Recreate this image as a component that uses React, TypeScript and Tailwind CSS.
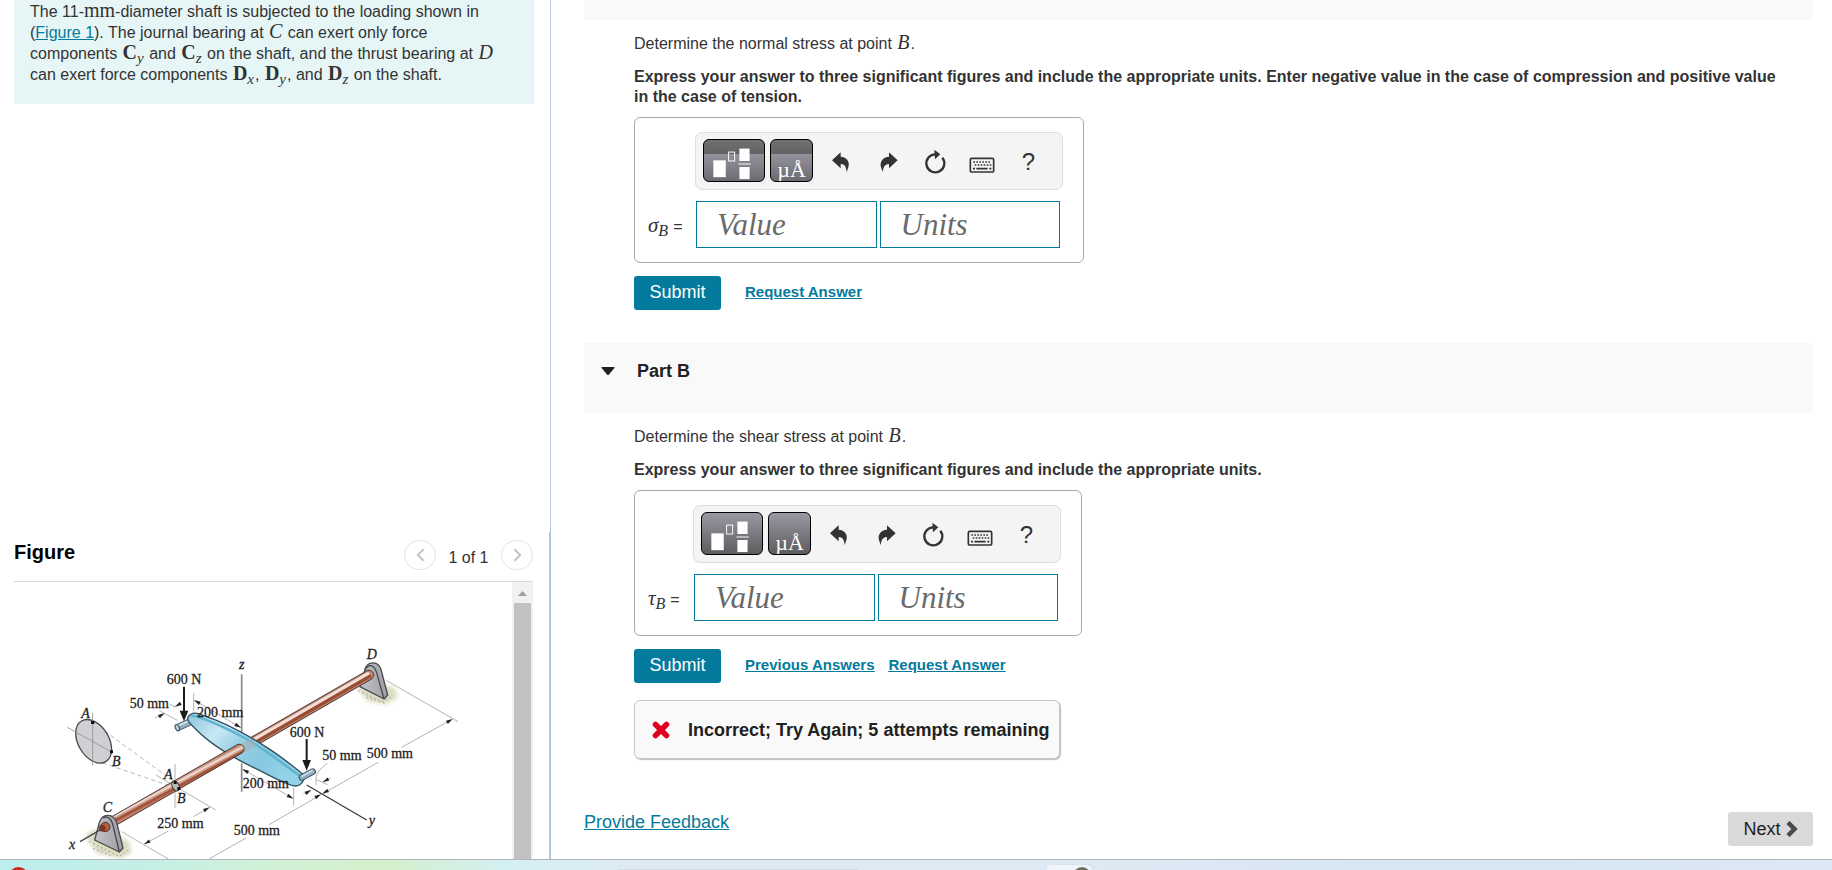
import type { ReactNode } from "react";

const SERIF = "font-['Liberation_Serif',serif]";

function Var({ children }: { children: ReactNode }) {
  return <i className={`${SERIF} mx-px text-[20px] leading-[0]`}>{children}</i>;
}

function Vec({ name, axis }: { name: string; axis: string }) {
  return (
    <span className={`${SERIF} mx-px text-[20px] leading-[0]`}>
      <b>{name}</b>
      <sub className="text-[15px] italic">{axis}</sub>
    </span>
  );
}

function ArrowHead({ x, y, angle }: { x: number; y: number; angle: number }) {
  return <path d="M0 0L-20 -5.5L-20 5.5Z" fill="#222" transform={`translate(${x} ${y}) rotate(${angle})`} />;
}

function ShaftFigure() {
  return (
    <svg
      viewBox="-138 -174 1494 831"
      className="h-[277px] w-[498px] shrink-0"
      role="img"
      aria-label="Shaft supported by bearings at C and D"
    >
      <defs>
        <linearGradient id="blade" x1="0" y1="0" x2="1" y2="0.6">
          <stop offset="0" stopColor="#8cc6dd" />
          <stop offset="0.3" stopColor="#c8e8f4" />
          <stop offset="0.5" stopColor="#9ad1e5" />
          <stop offset="0.75" stopColor="#86c8df" />
          <stop offset="1" stopColor="#93d2e7" />
        </linearGradient>
        <linearGradient id="shaft" gradientUnits="userSpaceOnUse" x1="338" y1="425" x2="352" y2="451">
          <stop offset="0" stopColor="#c08671" />
          <stop offset="0.28" stopColor="#f4e2da" />
          <stop offset="0.5" stopColor="#c98f79" />
          <stop offset="0.68" stopColor="#96492f" />
          <stop offset="1" stopColor="#c98770" />
        </linearGradient>
        <linearGradient id="bracket" x1="0" y1="0" x2="1" y2="0">
          <stop offset="0" stopColor="#c4c5ca" />
          <stop offset="1" stopColor="#9c9da3" />
        </linearGradient>
        <filter id="soft" x="-20%" y="-30%" width="140%" height="160%">
          <feGaussianBlur stdDeviation="7" />
        </filter>
      </defs>

      <g stroke="#b3b3b3" strokeWidth="3" fill="none">
        <path d="M980 122L1194 245" />
        <path d="M790 460L955 367M1025 322L1176 238" />
        <path d="M447 657L558 594M627 554L783 464" />
        <path d="M185 575L325 657" />
        <path d="M252 613L325 573M400 530L448 503" />
        <path d="M288 405L467 510" />
        <path d="M345 372V505" />
        <path d="M401 160V212M405 182L543 263" />
        <path d="M549 388L700 476M701 443V496" />
        <path d="M298 212L352 241M330 193L345 200M285 234L312 220M340 202L362 190" />
        <path d="M802 370Q768 395 768 412V436M768 418L802 434M812 414L790 426M730 462L752 451" />
      </g>
      <g stroke="#aaa" strokeWidth="2.5" strokeDasharray="13 9" fill="none">
        <path d="M98 247L345 427" />
        <path d="M128 369L340 441" />
      </g>

      <ArrowHead x={1178} y={237} angle={-30} />
      <ArrowHead x={787} y={461} angle={150} />
      <ArrowHead x={783} y={463} angle={-30} />
      <ArrowHead x={252} y={613} angle={150} />
      <ArrowHead x={449} y={502} angle={-30} />
      <ArrowHead x={543} y={263} angle={30} />
      <ArrowHead x={402} y={180} angle={210} />
      <ArrowHead x={700} y={476} angle={30} />
      <ArrowHead x={547} y={387} angle={210} />
      <ArrowHead x={314} y={220} angle={-30} />
      <ArrowHead x={345} y={200} angle={150} />
      <ArrowHead x={788} y={427} angle={150} />
      <ArrowHead x={754} y={450} angle={-30} />

      <g filter="url(#soft)" fill="#dcdcc2">
        <path d="M75 585L100 570L205 600L215 640L180 655L110 640Z" />
        <path d="M890 145L915 130L1000 140L1015 170L980 192L925 185Z" />
      </g>
      <g fill="none" stroke="#a3a3a0" strokeWidth="4" strokeDasharray="4 9">
        <path d="M88 605L178 650L206 630M100 625L160 650" />
        <path d="M895 152L965 185L1000 170M920 172L975 190" />
      </g>

      <g stroke="#4a4a4e" strokeWidth="4" strokeLinejoin="round">
        <path d="M900 140L914 92C920 62 956 60 964 92L983 165L972 177Z" fill="url(#bracket)" />
        <path d="M914 92C928 66 944 78 950 98L972 177" fill="none" />
      </g>

      <path d="M545 325L927 105" stroke="#49332c" strokeWidth="31" strokeLinecap="round" />
      <g strokeLinecap="round">
        <path d="M545 325L927 105" stroke="#c08671" strokeWidth="26" />
        <path d="M543 321L924 101" stroke="#f2ded6" strokeWidth="10" />
        <path d="M548 329L929 109" stroke="#9b4d34" strokeWidth="10" />
      </g>

      <path d="M545 103V300M545 370V455" stroke="#8a8a8a" strokeWidth="5" />

      <g strokeLinecap="butt">
        <path d="M350 264L398 242" stroke="#3f505c" strokeWidth="22" />
        <path d="M352 263L398 242" stroke="#8fb0c2" strokeWidth="17" />
        <path d="M352 259L398 238" stroke="#d4e3ec" strokeWidth="5" />
        <ellipse cx="352" cy="263" rx="6" ry="10" transform="rotate(-25 352 263)" fill="#b9ccd8" stroke="#3f505c" strokeWidth="3" />
      </g>
      <path
        d="M384 232C392 216 412 218 430 226C500 250 560 283 620 322C665 350 700 380 728 402C738 412 728 436 708 438C690 440 640 412 600 392C540 364 450 315 398 258C386 246 380 240 384 232Z"
        fill="url(#blade)"
        stroke="#31505f"
        strokeWidth="4"
      />
      <path d="M394 228C410 226 480 254 550 292C620 330 680 380 720 408" fill="none" stroke="#5fb2d0" strokeWidth="7" />
      <path d="M540 312L575 296L590 318L552 338Z" fill="#9fb3bc" opacity="0.7" />
      <g strokeLinecap="round">
        <path d="M726 412L758 395" stroke="#3f505c" strokeWidth="20" />
        <path d="M726 412L758 395" stroke="#8fb0c2" strokeWidth="14" />
        <path d="M726 409L756 392" stroke="#d4e3ec" strokeWidth="4" />
      </g>

      <path d="M150 550L538 327" stroke="#49332c" strokeWidth="31" strokeLinecap="round" />
      <path d="M150 550L538 327" stroke="url(#shaft)" strokeWidth="26" strokeLinecap="round" />
      <ellipse cx="347" cy="438" rx="10" ry="16" transform="rotate(-30 347 438)" fill="#b9b9bd" stroke="#333" strokeWidth="3" />
      <path d="M341 423h9v9h-9zM352 441h9v9h-9z" fill="#111" />

      <g stroke="#4a4a4e" strokeWidth="4" strokeLinejoin="round">
        <path d="M104 600L118 548C126 520 160 518 170 548L189 624L178 636Z" fill="url(#bracket)" />
        <path d="M128 534C144 524 156 540 160 560L178 636" fill="none" />
        <path d="M60 605L122 569" />
      </g>
      <circle cx="136" cy="561" r="14" fill="#b0603f" stroke="#49332c" strokeWidth="3" />
      <circle cx="127" cy="565" r="10" fill="#7c3722" />
      <path d="M740 435L920 540" stroke="#3d3d3d" strokeWidth="4" />

      <ellipse cx="101" cy="304" rx="46" ry="71" transform="rotate(-31 101 304)" fill="#cfd0d4" stroke="#4a4a4e" strokeWidth="4" />
      <path d="M98 218V376M22 262L158 338" stroke="#8f8f8f" strokeWidth="2.5" />
      <path d="M93 243h10v9h-10zM150 331h9v9h-9z" fill="#111" />

      <g fill="#1d1a1b" stroke="#1d1a1b">
        <path d="M372 140V220M740 297V365" strokeWidth="6" />
        <path d="M359 212H385L372 244ZM727 360H753L740 392Z" stroke="none" />
      </g>

      <g fill="#1d1a1b" stroke="#1d1a1b" strokeWidth="0.8" className="font-['Liberation_Serif',serif] text-[42px]">
        <text x="320" y="132">600 N</text>
        <text x="209" y="203">50 mm</text>
        <text x="411" y="230">200 mm</text>
        <text x="689" y="290">600 N</text>
        <text x="787" y="360">50 mm</text>
        <text x="920" y="354">500 mm</text>
        <text x="548" y="444">200 mm</text>
        <text x="292" y="564">250 mm</text>
        <text x="521" y="586">500 mm</text>
        <g className="italic">
          <text x="64" y="235">A</text>
          <text x="156" y="377">B</text>
          <text x="312" y="417">A</text>
          <text x="351" y="489">B</text>
          <text x="128" y="515">C</text>
          <text x="920" y="58">D</text>
          <text x="537" y="86">z</text>
          <text x="27" y="628">x</text>
          <text x="926" y="556">y</text>
        </g>
      </g>
    </svg>
  );
}

function UndoIcon() {
  return (
    <svg viewBox="616 120 63 72" className="h-[24px] w-[21px]" fill="#333" aria-hidden="true">
      <path d="M622 151L648 127V140C664 141 675 152 672 168L666 187C665 170 660 162 648 162V175Z" />
    </svg>
  );
}

function RedoIcon() {
  return (
    <svg viewBox="758 120 63 72" className="h-[24px] w-[21px]" fill="#333" aria-hidden="true">
      <path d="M820 151L794 127V140C778 141 767 152 769 168L775 187C777 170 782 162 794 162V175Z" />
    </svg>
  );
}

function ResetIcon() {
  return (
    <svg viewBox="895 120 72 78" className="h-[26px] w-[24px]" aria-hidden="true">
      <path d="M953 146A27 27 0 1 1 932 136" fill="none" stroke="#333" strokeWidth="7" />
      <path d="M929 122L947 136L931 151Z" fill="#333" />
    </svg>
  );
}

function KeyboardIcon() {
  return (
    <svg viewBox="1033 142 78 48" className="mt-[5px] h-[16px] w-[26px]" aria-hidden="true">
      <rect x="1037" y="146" width="70" height="41" rx="4" fill="none" stroke="#333" strokeWidth="5" />
      <path d="M1046 157H1100M1050 166H1100" stroke="#333" strokeWidth="5" strokeDasharray="5 4" />
      <path d="M1045 177h6M1055 177H1089M1094 177h6" stroke="#333" strokeWidth="5" />
    </svg>
  );
}

function TemplateIcon() {
  return (
    <svg viewBox="236 87 186 129" className="h-full w-full" aria-hidden="true">
      <g fill="#fff">
        <rect x="264" y="151" width="39" height="53" />
        <rect x="346" y="114" width="32" height="39" />
        <rect x="343" y="161" width="39" height="3" />
        <rect x="346" y="172" width="32" height="38" />
      </g>
      <rect x="312" y="125" width="19" height="28" fill="none" stroke="#fff" strokeWidth="3" />
    </svg>
  );
}

const cell = "flex w-[47px] items-center justify-center text-[#333]";

function AnswerBox({
  symbol,
  labelWidth,
  keyFill,
}: {
  symbol: string;
  labelWidth: string;
  keyFill: string;
}) {
  const key = `h-[43px] overflow-hidden rounded-[6px] border border-black ${keyFill}`;
  const field = `h-[47px] min-w-0 flex-1 border border-[#047a9c] bg-white pl-[20px] text-[31px] italic text-[#333] outline-none placeholder:text-[#6a6a6a] ${SERIF}`;
  return (
    <div className="mt-[10px] flex w-fit rounded-[6px] border border-[#a9a9a9] py-[14px] pr-[20px] pl-[13px]">
      <div className={`${labelWidth} flex shrink-0 items-end pb-[9px]`}>
        <span className="flex items-baseline gap-[5px] whitespace-nowrap text-[16px] leading-[24px]">
          <i className={`${SERIF} text-[21px] leading-[0]`}>
            {symbol}
            <sub className="text-[16px]">B</sub>
          </i>
          <span>=</span>
        </span>
      </div>
      <div className="flex w-[368px] flex-col gap-[11px]">
        <div className="flex h-[58px] items-start rounded-[7px] border border-[#dedede] bg-[#f4f4f4] pt-[6px] pl-[7px]">
          <button type="button" aria-label="Templates" className={`${key} w-[62px]`}>
            <TemplateIcon />
          </button>
          <button
            type="button"
            aria-label="Symbols"
            className={`${key} ${SERIF} ml-[5px] flex w-[43px] items-end justify-center text-[22px] leading-[22px] text-white`}
          >
            µÅ
          </button>
          <div className="ml-1 flex h-[46px]">
            <button type="button" aria-label="Undo" className={cell}>
              <UndoIcon />
            </button>
            <button type="button" aria-label="Redo" className={cell}>
              <RedoIcon />
            </button>
            <button type="button" aria-label="Reset" className={cell}>
              <ResetIcon />
            </button>
            <button type="button" aria-label="Keyboard shortcuts" className={cell}>
              <KeyboardIcon />
            </button>
            <button type="button" aria-label="Help" className={`${cell} text-[24px]`}>
              ?
            </button>
          </div>
        </div>
        <div className="flex gap-[3px] pr-[3px] pl-px">
          <input aria-label="Value" placeholder="Value" className={field} />
          <input aria-label="Units" placeholder="Units" className={field} />
        </div>
      </div>
    </div>
  );
}

function Actions({ links }: { links: string[] }) {
  return (
    <div className="mt-[13px] flex items-center">
      <button type="button" className="h-[34px] w-[87px] rounded-[3px] bg-[#047a9c] pb-[2px] text-[18px] text-white">
        Submit
      </button>
      <div className="ml-6 flex gap-[14px] pb-[3px] text-[15px] font-bold text-[#047a9c] underline">
        {links.map((l) => (
          <a key={l} href="#">
            {l}
          </a>
        ))}
      </div>
    </div>
  );
}

export default function App() {
  return (
    <div className="flex h-screen flex-col overflow-hidden bg-white font-['Liberation_Sans',Arial,sans-serif] text-[16px] text-[#333]">
      <div className="flex min-h-0 flex-1">
        <aside className="flex w-[551px] shrink-0 flex-col">
          <div className="min-h-0 flex-1 border-r border-[#b9c7dc] pr-[16px] pl-[14px]">
            <p className="bg-[#e6f6f6] pt-px pr-[24px] pb-[19px] pl-[16px] leading-[21px]">
              The 11-<span className={`${SERIF} text-[20px] leading-[0]`}>mm</span>-diameter shaft is subjected to the
              loading shown in (
              <a href="#figure" className="text-[#047a9c] underline">
                Figure 1
              </a>
              ). The journal bearing at <Var>C</Var> can exert only force components <Vec name="C" axis="y" /> and{" "}
              <Vec name="C" axis="z" /> on the shaft, and the thrust bearing at <Var>D</Var> can exert force components{" "}
              <Vec name="D" axis="x" />, <Vec name="D" axis="y" />, and <Vec name="D" axis="z" /> on the shaft.
            </p>
          </div>
          <section
            id="figure"
            className="flex h-[327px] shrink-0 flex-col border-r-2 border-[#b5c8d8] pr-[16px] pl-[14px]"
          >
            <header className="flex h-[50px] items-start justify-between border-b border-[#d9d9d9] pt-[8px]">
              <h2 className="text-[20px] leading-[24px] font-bold text-black">Figure</h2>
              <div className="flex items-center">
                <button
                  type="button"
                  aria-label="Previous figure"
                  className="flex h-[30px] w-[32px] items-center justify-center rounded-full border border-[#e3e3e3]"
                >
                  <svg viewBox="0 0 10 16" className="h-[14px] w-[9px]" fill="none" stroke="#c4c4c4" strokeWidth="2.4" aria-hidden="true">
                    <path d="M8.500 1.500L2 8L8.500 14.500" />
                  </svg>
                </button>
                <span className="w-[65px] pt-[6px] text-center">1 of 1</span>
                <button
                  type="button"
                  aria-label="Next figure"
                  className="flex h-[30px] w-[32px] items-center justify-center rounded-full border border-[#e3e3e3]"
                >
                  <svg viewBox="0 0 10 16" className="h-[14px] w-[9px]" fill="none" stroke="#c4c4c4" strokeWidth="2.4" aria-hidden="true">
                    <path d="M1.500 1.500L8 8L1.500 14.500" />
                  </svg>
                </button>
              </div>
            </header>
            <div className="flex min-h-0 flex-1 justify-between">
              <ShaftFigure />
              <div className="flex w-[21px] flex-col bg-[#f1f1f1] px-[2px]" aria-hidden="true">
                <div className="flex h-[21px] items-center justify-center pt-[2px]">
                  <svg viewBox="0 0 9 5" className="h-[5px] w-[9px]" fill="#a0a0a0">
                    <path d="M0 5L4.500 0L9 5Z" />
                  </svg>
                </div>
                <div className="flex-1 bg-[#c1c1c1]" />
              </div>
            </div>
          </section>
        </aside>

        <main className="min-w-0 flex-1 pr-[19px] pl-[33px]">
          <div className="h-[20px] bg-[#f9f9f9]" />
          <section className="pt-[14px] pr-[20px] pl-[50px] leading-[20px]">
            <p>
              Determine the normal stress at point <Var>B</Var>.
            </p>
            <p className="mt-[13px] font-bold">
              Express your answer to three significant figures and include the appropriate units. Enter negative value in
              the case of compression and positive value in the case of tension.
            </p>
            <AnswerBox
              symbol="σ"
              labelWidth="w-[47px]"
              keyFill="bg-[linear-gradient(#717171,#626262_35%,#94929d_35%,#6c6b70)]"
            />
            <Actions links={["Request Answer"]} />
          </section>

          <header className="mt-[33px] flex h-[70px] items-start bg-[#f9f9f9] pt-[17px] pl-[17px]">
            <button type="button" aria-expanded="true" className="flex items-center gap-[22px] text-[#212121]">
              <svg viewBox="0 0 14 8" className="h-[8px] w-[14px]" fill="#212121" aria-hidden="true">
                <path d="M1 0H13Q14 0 13.400 1L8 7.400Q7 8.400 6 7.400L0.600 1Q0 0 1 0Z" />
              </svg>
              <span className="text-[18px] leading-[22px] font-bold">Part B</span>
            </button>
          </header>
          <section className="pt-[14px] pr-[20px] pl-[50px] leading-[20px]">
            <p>
              Determine the shear stress at point <Var>B</Var>.
            </p>
            <p className="mt-[13px] font-bold">
              Express your answer to three significant figures and include the appropriate units.
            </p>
            <AnswerBox symbol="τ" labelWidth="w-[45px]" keyFill="bg-[linear-gradient(#9b99a5,#5c5c5e)]" />
            <Actions links={["Previous Answers", "Request Answer"]} />
            <div className="mt-[17px] flex h-[59px] w-fit items-center rounded-[6px] border border-[#c7c7c7] bg-[#f9f9f9] pr-[10px] pl-[17px] shadow-[1px_1px_1px_#bdbdbd]">
              <svg viewBox="0 0 18 18" className="h-[18px] w-[18px]" aria-hidden="true">
                <path d="M3.500 3.500L14.500 14.500M14.500 3.500L3.500 14.500" stroke="#e0001f" strokeWidth="5.500" strokeLinecap="round" />
              </svg>
              <span className="ml-[18px] text-[18px] font-bold text-[#212121]">
                Incorrect; Try Again; 5 attempts remaining
              </span>
            </div>
          </section>

          <footer className="mt-[53px] flex items-start justify-between text-[18px] leading-[20px]">
            <a href="#" className="text-[#047a9c] underline">
              Provide Feedback
            </a>
            <button
              type="button"
              className="flex h-[34px] w-[85px] items-center justify-center gap-[5px] rounded-[3px] bg-[#d9d9d9] text-[#212121]"
            >
              Next
              <svg viewBox="0 0 12 16" className="h-[16px] w-[12px]" fill="none" stroke="#4a4a4a" strokeWidth="4.500" aria-hidden="true">
                <path d="M2 1.500L8.500 8L2 14.500" />
              </svg>
            </button>
          </footer>
        </main>
      </div>

      <div className="flex h-[11px] shrink-0 overflow-hidden border-t border-[#aeb6bd] bg-[linear-gradient(90deg,#bdeeee_0%,#c4efe6_8%,#d2f1d6_15%,#d4efcb_21%,#d4eff4_28%,#dfe9f4_35%,#dfe9f4_60%,#d6e6f3_78%,#dde8f4_100%)]">
        <svg viewBox="0 0 1832 10" className="h-[10px] w-[1832px] shrink-0" aria-hidden="true">
          <circle cx="18.500" cy="17" r="10" fill="#c9281c" />
          <rect x="615" y="9" width="247" height="12" rx="6" fill="#cfdde6" />
          <rect x="1050" y="5" width="44" height="20" rx="4" fill="#e3edf5" stroke="#cfdce8" />
          <rect x="1047" y="5" width="44" height="20" rx="4" fill="#eff5fa" />
          <circle cx="1082" cy="16" r="9" fill="#6d6c5d" />
        </svg>
      </div>
    </div>
  );
}
